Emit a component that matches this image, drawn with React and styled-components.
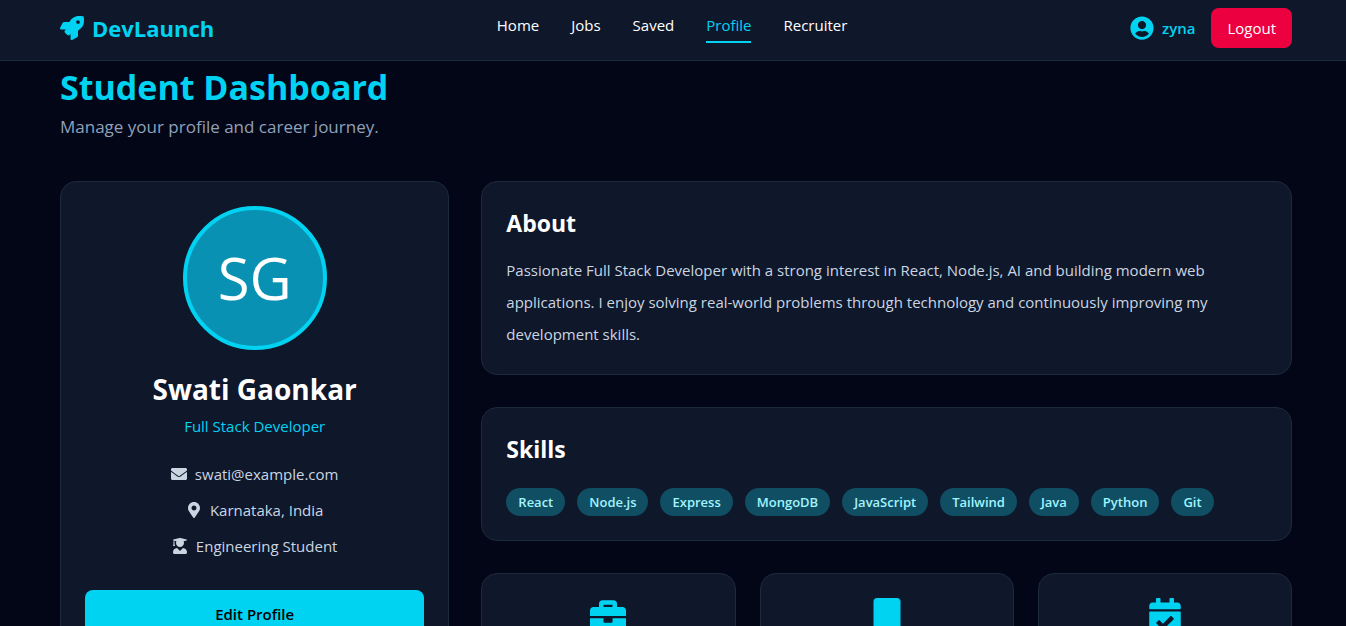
import styled, { createGlobalStyle } from "styled-components";
import {
  FaBookmark,
  FaBriefcase,
  FaCalendarCheck,
  FaEnvelope,
  FaMapMarkerAlt,
  FaRocket,
  FaUserCircle,
  FaUserGraduate,
} from "react-icons/fa";

const theme = {
  page: "#020617",
  panel: "#0f172a",
  border: "#1e293b",
  cyan: "#00d3f2",
  cyan_dark: "#0891b2",
  red: "#ec003f",
  text: "#cad5e2",
  muted: "#90a1b9",
};

const GlobalStyle = createGlobalStyle`
  * {
    box-sizing: border-box;
    margin: 0;
    padding: 0;
  }

  body {
    background: ${theme.page};
    color: #fff;
    font-family: "Open Sans", "Noto Sans", sans-serif;
    font-size: 15px;
    line-height: 24px;
  }

  a {
    color: inherit;
    text-decoration: none;
  }

  button {
    border: none;
    font: inherit;
    cursor: pointer;
  }

  ul {
    list-style: none;
  }
`;

const Page = styled.div`
  height: 100vh;
  overflow: hidden;
`;

const Header = styled.header`
  display: flex;
  align-items: center;
  justify-content: space-between;
  padding: 8px 54px 12px 60px;
  background: ${theme.panel};
  border-bottom: 1px solid ${theme.border};
`;

const Logo = styled.a`
  display: flex;
  align-items: center;
  gap: 8px;
  color: ${theme.cyan};
  font-size: 22px;
  line-height: 32px;
  font-weight: 700;

  svg {
    font-size: 24px;
  }
`;

const Nav = styled.nav`
  display: flex;
  gap: 32px;
`;

const NavLink = styled.a`
  padding-bottom: 4px;
  border-bottom: 2px solid
    ${({ $active }) => ($active ? theme.cyan : "transparent")};
  color: ${({ $active }) => ($active ? theme.cyan : "#fff")};
`;

const Account = styled.div`
  display: flex;
  align-items: center;
  gap: 16px;
`;

const UserLink = styled.a`
  display: flex;
  align-items: center;
  gap: 8px;
  color: ${theme.cyan};
  font-weight: 600;

  svg {
    font-size: 24px;
  }
`;

const LogoutButton = styled.button`
  padding: 8px 16px;
  border-radius: 8px;
  background: ${theme.red};
  color: #fff;
`;

const Main = styled.main`
  padding: 6px 54px 40px 60px;
`;

const Title = styled.h1`
  color: ${theme.cyan};
  font-size: 34px;
  line-height: 40px;
  font-weight: 700;
`;

const Subtitle = styled.p`
  margin: 6px 0 40px;
  color: ${theme.muted};
  font-size: 17px;
  line-height: 28px;
`;

const Columns = styled.div`
  display: grid;
  grid-template-columns: repeat(3, minmax(0, 1fr));
  gap: 32px;
`;

const Content = styled.div`
  grid-column: span 2;
  display: flex;
  flex-direction: column;
  gap: 32px;
`;

const Card = styled.section`
  padding: 24px;
  border: 1px solid ${theme.border};
  border-radius: 16px;
  background: ${theme.panel};
`;

const ProfileCard = styled(Card)`
  display: flex;
  flex-direction: column;
  align-items: center;
`;

const Avatar = styled.div`
  display: flex;
  align-items: center;
  justify-content: center;
  width: 144px;
  height: 144px;
  border: 4px solid ${theme.cyan};
  border-radius: 50%;
  background: ${theme.cyan_dark};
  font-size: 58px;
`;

const Name = styled.h2`
  margin-top: 20px;
  font-size: 28px;
  line-height: 38px;
  font-weight: 700;
`;

const Role = styled.p`
  margin-top: 6px;
  color: ${theme.cyan};
`;

const Details = styled.ul`
  display: flex;
  flex-direction: column;
  gap: 12px;
  margin: 24px 0 32px;
  color: ${theme.text};

  li {
    display: flex;
    align-items: center;
    justify-content: center;
    gap: 8px;
  }

  svg {
    font-size: 16px;
  }
`;

const EditButton = styled.button`
  width: 100%;
  padding: 12px;
  border-radius: 8px;
  background: ${theme.cyan};
  color: #000;
  font-weight: 600;
`;

const SectionTitle = styled.h2`
  font-size: 23px;
  line-height: 34px;
  font-weight: 700;
`;

const AboutText = styled.p`
  margin-top: 14px;
  color: ${theme.text};
  line-height: 32px;
`;

const SkillList = styled.ul`
  display: flex;
  flex-wrap: wrap;
  gap: 12px;
  margin-top: 22px;
`;

const Skill = styled.li`
  padding: 4px 12px;
  border-radius: 14px;
  background: #104e64;
  color: #a2f4fd;
  font-size: 13px;
  line-height: 20px;
  font-weight: 600;
`;

const Stats = styled.div`
  display: grid;
  grid-template-columns: repeat(3, minmax(0, 1fr));
  gap: 24px;
`;

const StatCard = styled(Card)`
  display: flex;
  justify-content: center;
  min-height: 160px;
  color: ${theme.cyan};
  font-size: 36px;
`;

const links = ["Home", "Jobs", "Saved", "Profile", "Recruiter"];

const details = [
  { icon: FaEnvelope, text: "swati@example.com" },
  { icon: FaMapMarkerAlt, text: "Karnataka, India" },
  { icon: FaUserGraduate, text: "Engineering Student" },
];

const skills = [
  "React",
  "Node.js",
  "Express",
  "MongoDB",
  "JavaScript",
  "Tailwind",
  "Java",
  "Python",
  "Git",
];

const stats = [FaBriefcase, FaBookmark, FaCalendarCheck];

const App = () => {
  return (
    <Page>
      <GlobalStyle />
      <Header>
        <Logo href="#home">
          <FaRocket />
          DevLaunch
        </Logo>
        <Nav>
          {links.map((link) => (
            <NavLink
              key={link}
              href={`#${link.toLowerCase()}`}
              $active={link === "Profile"}
            >
              {link}
            </NavLink>
          ))}
        </Nav>
        <Account>
          <UserLink href="#profile">
            <FaUserCircle />
            zyna
          </UserLink>
          <LogoutButton type="button">Logout</LogoutButton>
        </Account>
      </Header>

      <Main>
        <Title>Student Dashboard</Title>
        <Subtitle>Manage your profile and career journey.</Subtitle>

        <Columns>
          <ProfileCard>
            <Avatar>SG</Avatar>
            <Name>Swati Gaonkar</Name>
            <Role>Full Stack Developer</Role>
            <Details>
              {details.map(({ icon: Icon, text }) => (
                <li key={text}>
                  <Icon />
                  {text}
                </li>
              ))}
            </Details>
            <EditButton type="button">Edit Profile</EditButton>
          </ProfileCard>

          <Content>
            <Card>
              <SectionTitle>About</SectionTitle>
              <AboutText>
                Passionate Full Stack Developer with a strong interest in React,
                Node.js, AI and building modern web applications. I enjoy
                solving real-world problems through technology and continuously
                improving my development skills.
              </AboutText>
            </Card>

            <Card>
              <SectionTitle>Skills</SectionTitle>
              <SkillList>
                {skills.map((skill) => (
                  <Skill key={skill}>{skill}</Skill>
                ))}
              </SkillList>
            </Card>

            <Stats>
              {stats.map((Icon, index) => (
                <StatCard key={index}>
                  <Icon />
                </StatCard>
              ))}
            </Stats>
          </Content>
        </Columns>
      </Main>
    </Page>
  );
};

export default App;
